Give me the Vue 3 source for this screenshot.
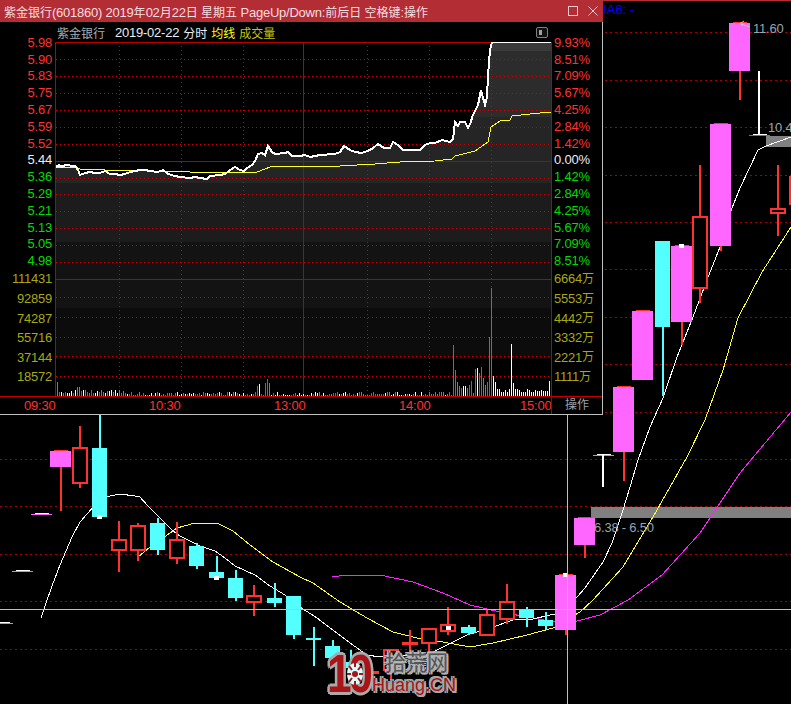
<script setup>
const titleText = '紫金银行(601860) 2019年02月22日 星期五 PageUp/Down:前后日 空格键:操作'
// latin and cjk runs have different metrics in the original font
const titleRuns = titleText.match(/[\u4e00-\u9fff]+|[^\u4e00-\u9fff]+/g).map((text) => ({
  text,
  cjk: /[\u4e00-\u9fff]/.test(text),
}))

const priceRows = [
  ['5.98', '9.93%', 'up'], ['5.90', '8.51%', 'up'], ['5.83', '7.09%', 'up'], ['5.75', '5.67%', 'up'],
  ['5.67', '4.25%', 'up'], ['5.59', '2.84%', 'up'], ['5.52', '1.42%', 'up'], ['5.44', '0.00%', 'flat'],
  ['5.36', '1.42%', 'down'], ['5.29', '2.84%', 'down'], ['5.21', '4.25%', 'down'], ['5.13', '5.67%', 'down'],
  ['5.05', '7.09%', 'down'], ['4.98', '8.51%', 'down'],
]
const volumeRows = [
  ['111431', '6664', '万'], ['92859', '5553', '万'], ['74287', '4442', '万'],
  ['55716', '3332', '万'], ['37144', '2221', '万'], ['18572', '1111', '万'],
]
const ticks = ['09:30', '10:30', '13:00', '14:00', '15:00']

// intraday chart
const solidH = [161, 279]
const dotH = [59, 76, 93, 110, 127, 144, 178, 194, 211, 228, 245, 262, 297, 317, 337, 356, 376]
const dotV = [119, 181, 243, 367, 429, 491]
const bands = [
  [42, 9, '#3a3a3a'], [51, 66, '#2c2c2c'], [117, 66, '#252525'], [183, 59, '#1c1c1c'],
  [242, 66, '#131313'], [308, 51, '#0c0c0c'],
]
const priceLine = '56,167 59,165 62,167 65,165 75,166 78,170 80,175 85,173 90,172 95,173 100,173 105,171 110,174 115,174 120,175 125,174 130,172 135,171 140,170 145,170 150,171 158,172 163,170 168,174 175,176 180,177 190,178 195,177 200,178 207,179 210,176 220,175 225,174 230,170 235,167 240,170 244,171 247,168 252,165 255,161 258,154 262,153 265,155 268,146 272,152 275,154 285,153 288,152 292,156 300,156 305,155 310,157 320,155 335,154 340,152 344,146 350,150 355,152 362,153 370,150 373,148 378,144 384,148 390,148 393,142 398,145 403,150 420,150 425,145 430,143 435,143 442,140 450,142 453,139 455,122 458,126 460,122 465,122 468,128 471,122 472,117 478,105 481,90 485,105 487,97 488,76 490,50 492,42 551,42'
const avgLine = '56,167 75,167 80,169 105,170 150,171 190,172 240,172 257,172 265,169 270,167 285,166 340,166 375,164 400,162 435,161 452,159 455,156 475,151 485,144 488,142 491,127 500,121 510,120 512,116 530,114 551,112'
const priceArea = `${priceLine} 551,396 56,396`

const bigBars = {
  57: [14, 'g'], 77: [9, 'g'], 79: [9, 'g'], 83: [6, 'w'], 111: [6, 'w'], 257: [10, 'r'], 259: [12, 'w'],
  265: [13, 'r'], 267: [17, 'r'], 269: [13, 'g'], 453: [51, 'r'], 455: [26, 'r'], 457: [14, 'g'], 459: [10, 'g'],
  461: [8, 'r'], 463: [10, 'w'], 465: [10, 'w'], 467: [8, 'g'], 469: [11, 'r'], 471: [15, 'r'], 475: [27, 'r'],
  477: [28, 'w'], 479: [23, 'r'], 481: [29, 'r'], 483: [18, 'g'], 485: [11, 'g'], 487: [14, 'r'], 489: [59, 'r'],
  491: [108, 'r'], 493: [20, 'w'], 495: [14, 'w'], 511: [52, 'w'], 513: [13, 'w'], 549: [15, 'w'],
}
const barColors = { r: '#ff3232', g: '#00d800', w: '#ffffff' }
const volumeBars = []
let seed = 17
for (let x = 57; x < 551; x += 2) {
  seed = (seed * 137 + 59) % 1021
  let h = 1 + (seed >> 3) % 4
  if (x > 492) h += 3
  if (x < 125) h += 2
  let kind = ['r', 'g', 'w'][seed % 3]
  if (x > 492) kind = 'w'
  const big = bigBars[x]
  volumeBars.push({ x, h: big ? big[0] : h, color: barColors[big ? big[1] : kind] })
}

// daily candles behind the window
const gridLines = [32, 80, 127, 175, 222, 269, 317, 364, 412, 459, 506, 554, 601, 649]
const candles = [
  { t: 'c', x: 99.5, y1: 448, y2: 517, w1: 414, w2: 448, mark: 515 },
  { t: 'm', x: 60.5, y1: 451, y2: 467, w1: 467, w2: 511 },
  { t: 'h', x: 80, y1: 448, y2: 483, w1: 426, w2: 488 },
  { t: 'h', x: 119, y1: 540, y2: 550, w1: 521, w2: 572 },
  { t: 'h', x: 138, y1: 526, y2: 550, w1: 523, w2: 561 },
  { t: 'c', x: 157.5, y1: 523, y2: 550, w1: 518, w2: 555 },
  { t: 'h', x: 177, y1: 540, y2: 558, w1: 522, w2: 564 },
  { t: 'c', x: 196.5, y1: 546, y2: 566, w1: 543, w2: 569 },
  { t: 'c', x: 216.5, y1: 572, y2: 578, w1: 556, w2: 578, mark: 576 },
  { t: 'c', x: 235.5, y1: 578, y2: 598, w1: 570, w2: 601 },
  { t: 'h', x: 254, y1: 596, y2: 602, w1: 585, w2: 616 },
  { t: 'c', x: 274.5, y1: 598, y2: 603, w1: 583, w2: 607 },
  { t: 'c', x: 293.5, y1: 596, y2: 635, w1: 596, w2: 639 },
  { t: 'c', x: 313.5, y1: 638, y2: 640, w1: 627, w2: 666 },
  { t: 'c', x: 332.5, y1: 646, y2: 658, w1: 640, w2: 664 },
  { t: 'c', x: 351, y1: 662, y2: 668, w1: 650, w2: 674 },
  { t: 'r', x: 371, y1: 671, y2: 673, w1: 662, w2: 684 },
  { t: 'h', x: 391, y1: 650, y2: 670, w1: 650, w2: 680 },
  { t: 'r', x: 410, y1: 642, y2: 644, w1: 630, w2: 652 },
  { t: 'h', x: 429, y1: 629, y2: 643, w1: 628, w2: 652 },
  { t: 'h', x: 448, y1: 625, y2: 631, w1: 607, w2: 635, mark: 626 },
  { t: 'c', x: 468.5, y1: 627, y2: 633, w1: 625, w2: 635 },
  { t: 'h', x: 487, y1: 615, y2: 635, w1: 609, w2: 635 },
  { t: 'h', x: 507, y1: 602, y2: 619, w1: 584, w2: 624 },
  { t: 'c', x: 526.5, y1: 610, y2: 618, w1: 607, w2: 627 },
  { t: 'c', x: 545.5, y1: 620, y2: 626, w1: 612, w2: 630 },
  { t: 'm', x: 565.5, y1: 575, y2: 630, w1: 630, w2: 635, mark: 573 },
  { t: 'm', x: 584.5, y1: 518, y2: 545, w1: 545, w2: 558 },
  { t: 'm', x: 623.5, y1: 387, y2: 452, w1: 452, w2: 481 },
  { t: 'm', x: 642.5, y1: 311, y2: 380, w1: 380, w2: 380 },
  { t: 'c', x: 662.5, y1: 241, y2: 327, w1: 241, w2: 396 },
  { t: 'm', x: 681.5, y1: 246, y2: 322, w1: 322, w2: 345, mark: 244 },
  { t: 'h', x: 700, y1: 217, y2: 288, w1: 165, w2: 303 },
  { t: 'm', x: 720.5, y1: 124, y2: 246, w1: 246, w2: 251 },
  { t: 'm', x: 739.5, y1: 23, y2: 71, w1: 71, w2: 100 },
  { t: 'h', x: 778, y1: 209, y2: 213, w1: 165, w2: 236 },
  { t: 'h', x: 797, y1: 177, y2: 204, w1: 177, w2: 204 },
]
const doji = [
  { x: 0, y: 623, w: 13, top: 0, topW: 10 },
  { x: 12, y: 571, w: 21, top: 16, topW: 14 },
  { x: 31, y: 514, w: 21, top: 35, topW: 14 },
  { x: 593, y: 455, w: 21, top: 597, topW: 14 },
]
const whiteMa = '41,618 45,606 52,586 60,565 72,537 80,522 95,505 100,499 110,496 120,494 135,496 139,496 148,506 160,518 172,530 180,536 200,546 215,551 225,558 235,566 255,575 270,586 285,595 300,607 317,618 333,630 350,643 367,655 380,657 427,655 443,647 467,635 493,627 513,620 533,619 550,615 555,614 577,597 585,588 603,562 612,543 623,510 630,487 638,460 650,427 663,398 677,357 693,317 707,280 720,247 732,208 740,188 750,167 758,150 766,146 791,137'
const yellowMa = '138,557 150,547 163,538 177,528 195,523 217,523 233,531 250,545 273,562 300,577 313,583 340,602 367,618 393,632 417,638 443,642 470,647 493,643 527,635 553,628 580,612 593,600 623,567 653,517 687,457 705,420 723,370 738,318 762,272 791,227'
const magentaMa = '332,577 347,575 380,575 413,582 443,593 470,605 500,612 533,618 555,622 577,621 600,615 628,600 662,575 700,533 740,473 791,412'
</script>

<template>
  <div class="stage">
    <svg class="canvas" width="791" height="704" viewBox="0 0 791 704">
      <rect x="603" y="0" width="188" height="1" fill="#b32d35" />
      <line v-for="y in gridLines" :key="y" x1="0" :y1="y + 0.5" x2="791" :y2="y + 0.5" class="grid" />
      <rect x="591" y="507" width="200" height="11" fill="#808080" />
      <polygon points="766,136 791,136 791,147 766,147" fill="#808080" />
      <g shape-rendering="crispEdges" fill="none">
        <polyline :points="magentaMa" stroke="#ff22ff" />
        <polyline :points="yellowMa" stroke="#ffff30" />
        <polyline :points="whiteMa" stroke="#ffffff" />
      </g>
      <g shape-rendering="crispEdges">
        <g v-for="c in candles" :key="c.x">
          <template v-if="c.t === 'm'">
            <rect :x="c.x - 1" :y="c.w1" width="2" :height="c.w2 - c.w1" fill="#ff3232" />
            <rect :x="c.x - 7" :y="c.y1 - 1" width="14" height="1" fill="#ff3232" />
            <rect :x="c.x - 10.5" :y="c.y1" width="21" :height="c.y2 - c.y1" fill="#ff66ff" />
          </template>
          <template v-else-if="c.t === 'c'">
            <rect :x="c.x - 1" :y="c.w1" width="2" :height="c.w2 - c.w1" fill="#54ffff" />
            <rect :x="c.x - 7.5" :y="c.y1" width="15" :height="c.y2 - c.y1" fill="#54ffff" />
          </template>
          <template v-else-if="c.t === 'r'">
            <rect :x="c.x - 1" :y="c.w1" width="2" :height="c.w2 - c.w1" fill="#ff3232" />
            <rect :x="c.x - 8" :y="c.y1" width="16" :height="c.y2 - c.y1 + 1" fill="#ff3232" />
          </template>
          <template v-else>
            <rect :x="c.x - 1" :y="c.w1" width="2" :height="c.y1 - c.w1" fill="#ff3232" />
            <rect :x="c.x - 1" :y="c.y2" width="2" :height="c.w2 - c.y2" fill="#ff3232" />
            <rect :x="c.x - 7" :y="c.y1" width="14" :height="c.y2 - c.y1" fill="#000" stroke="#ff3232" stroke-width="2" />
          </template>
          <rect v-if="c.mark" :x="c.x - 2.5" :y="c.mark" width="5" height="4" fill="#fff" />
        </g>
        <g v-for="d in doji" :key="d.x">
          <rect :x="d.x" :y="d.y" :width="d.w" height="1" fill="#ff66ff" />
          <rect :x="d.top" :y="d.y - 1" :width="d.topW" height="1" fill="#fff" />
        </g>
        <rect x="602" y="455" width="2" height="32" fill="#fff" />
        <rect x="758" y="71" width="2" height="64" fill="#fff" />
        <rect x="753" y="134" width="14" height="1" fill="#fff" />
        <rect x="749" y="135" width="21" height="1" fill="#00c800" />
        <rect x="0" y="609" width="791" height="1" fill="#c0c0c0" />
        <rect x="567" y="414" width="1" height="290" fill="#c0c0c0" />
      </g>
      <path d="M750 27 741 24M744 21 740 23.500 743 26" stroke="#c4c4c4" fill="none" />
      <text x="596" y="14" class="ma-label">MA6: -</text>
      <text x="753" y="33" class="mark-label">11.60</text>
      <text x="768" y="132" class="mark-label">10.4</text>
      <text x="594" y="532" class="mark-label">6.38 - 6.50</text>
    </svg>

    <div class="kline-window">
      <div class="titlebar">
        <span class="title-text">
          <span v-for="(run, i) in titleRuns" :key="i" :class="run.cjk ? 'cjk' : 'latin'">{{ run.text }}</span>
        </span>
        <svg class="win-btn" width="10" height="10" viewBox="0 0 10 10">
          <rect x="0.5" y="0.5" width="9" height="9" fill="none" stroke="#e9c9cb" />
        </svg>
        <svg class="win-btn close" width="10" height="10" viewBox="0 0 10 10">
          <path d="M0.500 0.500 9.500 9.500M9.500 0.500 0.500 9.500" fill="none" stroke="#e9c9cb" />
        </svg>
      </div>
      <div class="legend">
        <span class="name">紫金银行</span>
        <span class="date latin">2019-02-22</span>
        <span class="date">分时</span>
        <span class="avg">均线</span>
        <span class="vol">成交量</span>
        <svg class="panel-toggle" width="12" height="11" viewBox="0 0 12 11">
          <rect x="0.500" y="0.500" width="11" height="10" rx="1.500" fill="#111" stroke="#808080" />
          <rect x="3" y="3" width="3" height="5" fill="#a0a0a0" />
        </svg>
      </div>
      <div class="chart-body">
        <div class="axis axis-left">
          <div v-for="row in priceRows" :key="row[0]" class="row price-row latin" :class="row[2]">{{ row[0] }}</div>
          <div v-for="row in volumeRows" :key="row[0]" class="row volume-row latin">{{ row[0] }}</div>
        </div>
        <svg class="plot" width="497" height="354" viewBox="55 42 497 354">
          <defs>
            <clipPath id="under-price"><polygon :points="priceArea" /></clipPath>
          </defs>
          <g clip-path="url(#under-price)" shape-rendering="crispEdges">
            <rect v-for="b in bands" :key="b[0]" x="55" :y="b[0]" width="497" :height="b[1]" :fill="b[2]" />
          </g>
          <g shape-rendering="crispEdges">
            <line v-for="y in dotH" :key="y" x1="56" :y1="y + 0.5" x2="551" :y2="y + 0.5" class="dot" />
            <line v-for="x in dotV" :key="x" :x1="x + 0.5" y1="42" :x2="x + 0.5" y2="396" class="dot" />
            <line v-for="y in solidH" :key="y" x1="55" :y1="y + 0.5" x2="552" :y2="y + 0.5" class="solid" />
            <line x1="55" y1="42.500" x2="552" y2="42.500" class="solid" />
            <line x1="303.500" y1="42" x2="303.500" y2="396" class="solid" />
            <line x1="55.500" y1="42" x2="55.500" y2="396" class="solid" />
            <line x1="551.500" y1="42" x2="551.500" y2="396" class="solid" />
            <rect v-for="b in volumeBars" :key="b.x" :x="b.x" :y="396 - b.h" width="1" :height="b.h" :fill="b.color" />
            <polyline :points="avgLine" fill="none" stroke="#ffff20" />
            <polyline :points="priceLine" fill="none" stroke="#fff" stroke-width="2" />
          </g>
        </svg>
        <div class="axis axis-right">
          <div v-for="row in priceRows" :key="row[1] + row[2]" class="row price-row latin" :class="row[2]">{{ row[1] }}</div>
          <div v-for="row in volumeRows" :key="row[1]" class="row volume-row">
            <span class="latin">{{ row[1] }}</span>{{ row[2] }}
          </div>
        </div>
      </div>
      <div class="time-axis">
        <div class="ticks latin">
          <span v-for="t in ticks" :key="t" class="tick">{{ t }}</span>
        </div>
        <div class="action">操作</div>
      </div>
    </div>

    <div class="logo">
      <div class="ten">10</div>
      <svg class="gear" width="18" height="26" viewBox="0 0 18 26">
        <ellipse cx="9" cy="13" rx="8" ry="11" fill="#d8ffff" />
        <g stroke="#a81418" stroke-width="2">
          <line x1="9" y1="1" x2="9" y2="6" />
          <line x1="9" y1="20" x2="9" y2="25" />
          <line x1="1" y1="13" x2="5" y2="13" />
          <line x1="13" y1="13" x2="17" y2="13" />
          <line x1="3" y1="5" x2="6" y2="9" />
          <line x1="15" y1="5" x2="12" y2="9" />
          <line x1="3" y1="21" x2="6" y2="17" />
          <line x1="15" y1="21" x2="12" y2="17" />
        </g>
        <circle cx="9" cy="13" r="3" fill="#a81418" />
      </svg>
      <div class="logo-names">
        <div class="cn-name">拾荒网</div>
        <div class="en-name">Huang.CN</div>
      </div>
    </div>
  </div>
</template>

<style scoped>
.stage {
  position: relative;
  width: 791px;
  height: 704px;
  overflow: hidden;
  background: #000;
  font-family: "Liberation Sans", "Noto Sans CJK SC", sans-serif;
  font-size: 12px;
}

.canvas {
  position: absolute;
  left: 0;
  top: 0;
}

.latin {
  font-size: 13px;
  letter-spacing: -0.23px;
}

.grid {
  stroke: #a40000;
  stroke-dasharray: 2 3;
}

.ma-label {
  fill: #0000ff;
  font-size: 13px;
}

.mark-label {
  fill: #98a4b0;
  font-size: 13px;
  letter-spacing: -0.23px;
}

.kline-window {
  position: absolute;
  left: 0;
  top: 0;
  width: 603px;
  height: 415px;
  box-sizing: border-box;
  background: #000;
}

.kline-window::after {
  content: "";
  position: absolute;
  left: 0;
  top: 22px;
  right: 0;
  bottom: 0;
  border-right: 1px solid #c0c0c0;
  border-bottom: 1px solid #c0c0c0;
  pointer-events: none;
}

.titlebar {
  display: flex;
  align-items: center;
  height: 22px;
  padding: 0 5px 0 4px;
  background: #b32d35;
  color: #f3dfe0;
  white-space: nowrap;
}

.title-text {
  white-space: pre;
}

.win-btn {
  margin-left: auto;
  flex: none;
}

.win-btn.close {
  margin-left: 10px;
}

.legend {
  display: flex;
  align-items: center;
  height: 20px;
  padding: 0 55px 0 57px;
  gap: 4px;
}

.name {
  color: #a8aeb4;
  margin-right: 6px;
}

.date {
  color: #e8eef4;
}

.avg {
  color: #ffff00;
}

.vol {
  color: #c4c410;
}

.panel-toggle {
  margin-left: auto;
}

.chart-body {
  display: flex;
  height: 354px;
}

.axis {
  flex: none;
  margin-top: -8px;
  color: #a8a810;
  line-height: 1;
  position: relative;
}

.axis-left {
  width: 55px;
  text-align: right;
  padding-right: 3px;
  box-sizing: border-box;
}

.axis-right {
  width: 50px;
  padding-left: 2px;
  box-sizing: border-box;
}

.row {
  display: flex;
  align-items: center;
  white-space: nowrap;
}

.axis-left .row {
  justify-content: flex-end;
}

.price-row {
  height: 16.800px;
}

.volume-row {
  height: 19.600px;
}

.up {
  color: #ff3232;
}

.flat {
  color: #e8eef8;
}

.down {
  color: #00dc00;
}

.plot {
  flex: none;
  display: block;
}

.dot {
  stroke: #d00000;
  stroke-dasharray: 1 3;
}

.solid {
  stroke: #b80000;
}

.time-axis {
  display: flex;
  height: 18px;
  box-sizing: border-box;
  border-top: 1px solid #c00000;
  color: #ff3232;
  line-height: 17px;
}

.ticks {
  display: flex;
  width: 551px;
  padding-left: 24px;
  box-sizing: border-box;
}

.tick {
  width: 125px;
  flex: none;
}

.tick:nth-child(4) {
  width: 121px;
}

.action {
  width: 51px;
  border-left: 1px solid #aa0000;
  box-sizing: border-box;
  text-align: center;
  color: #9aa4ae;
}

.logo {
  position: absolute;
  left: 327px;
  top: 646px;
  display: flex;
}

.ten {
  width: 45px;
  font-size: 54px;
  line-height: 54px;
  font-weight: bold;
  letter-spacing: -4px;
  color: #a81418;
  transform: scaleX(0.82);
  transform-origin: left center;
  text-shadow: 3px 0 #aaa, -3px 0 #aaa, 0 3px #aaa, 0 -3px #aaa, 2px 2px #aaa, -2px -2px #aaa, 2px -2px #aaa, -2px 2px #aaa;
}

.gear {
  position: absolute;
  left: 19px;
  top: 15px;
}

.cn-name {
  margin-left: 13px;
  margin-top: 4px;
  font-size: 21px;
  line-height: 25px;
  color: #555;
  text-shadow: 2px 0 #b4b4b4, -2px 0 #b4b4b4, 0 2px #b4b4b4, 0 -2px #b4b4b4, 2px 2px #b4b4b4, -2px -2px #b4b4b4;
}

.en-name {
  font-size: 18px;
  line-height: 20px;
  color: #a81418;
  white-space: nowrap;
  text-shadow: 2px 0 #aaa, -2px 0 #aaa, 0 2px #aaa, 0 -2px #aaa, 2px 2px #aaa, -2px -2px #aaa;
}
</style>

<style>
body {
  background: #000;
}
</style>
